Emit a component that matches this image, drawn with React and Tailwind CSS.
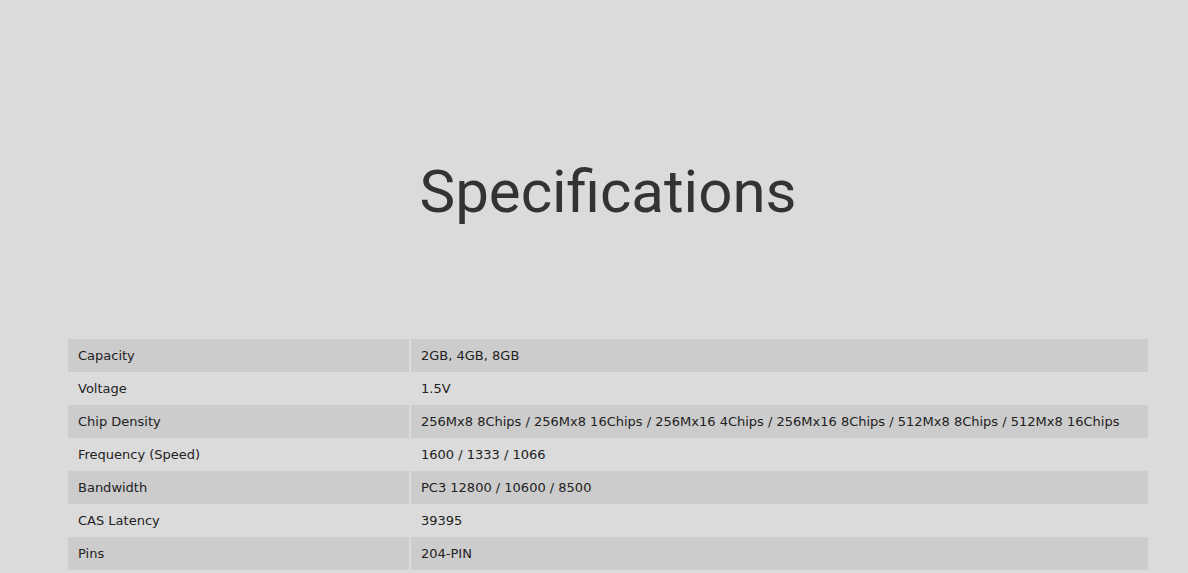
import React from 'react';

const specs = [
    ['Capacity', '2GB, 4GB, 8GB'],
    ['Voltage', '1.5V'],
    ['Chip Density', '256Mx8 8Chips / 256Mx8 16Chips / 256Mx16 4Chips / 256Mx16 8Chips / 512Mx8 8Chips / 512Mx8 16Chips'],
    ['Frequency (Speed)', '1600 / 1333 / 1066'],
    ['Bandwidth', 'PC3 12800 / 10600 / 8500'],
    ['CAS Latency', '39395'],
    ['Pins', '204-PIN'],
];

const App = () => {
    return (
        <div className="min-h-screen bg-[#dbdbdb] overflow-hidden">
            <div className="ml-[68px] w-[1080px]">
                <h1 className="pt-[152px] h-[339px] text-center text-[60px] leading-[80px] text-[#333333] font-['Roboto',sans-serif]">
                    Specifications
                </h1>
                <table className="border-separate border-spacing-x-[2px] border-spacing-y-0 -ml-[2px] w-[1084px] font-['DejaVu_Sans',sans-serif] text-[13px] text-[#222222]">
                    <tbody>
                        {specs.map(([label, value], i) => (
                            <tr key={label} className={i % 2 === 0 ? 'bg-[#cccccc]' : ''}>
                                <td className="w-[341px] h-[33px] px-[10px] align-middle">{label}</td>
                                <td className="h-[33px] px-[10px] align-middle">{value}</td>
                            </tr>
                        ))}
                    </tbody>
                </table>
            </div>
        </div>
    );
};

export default App;
